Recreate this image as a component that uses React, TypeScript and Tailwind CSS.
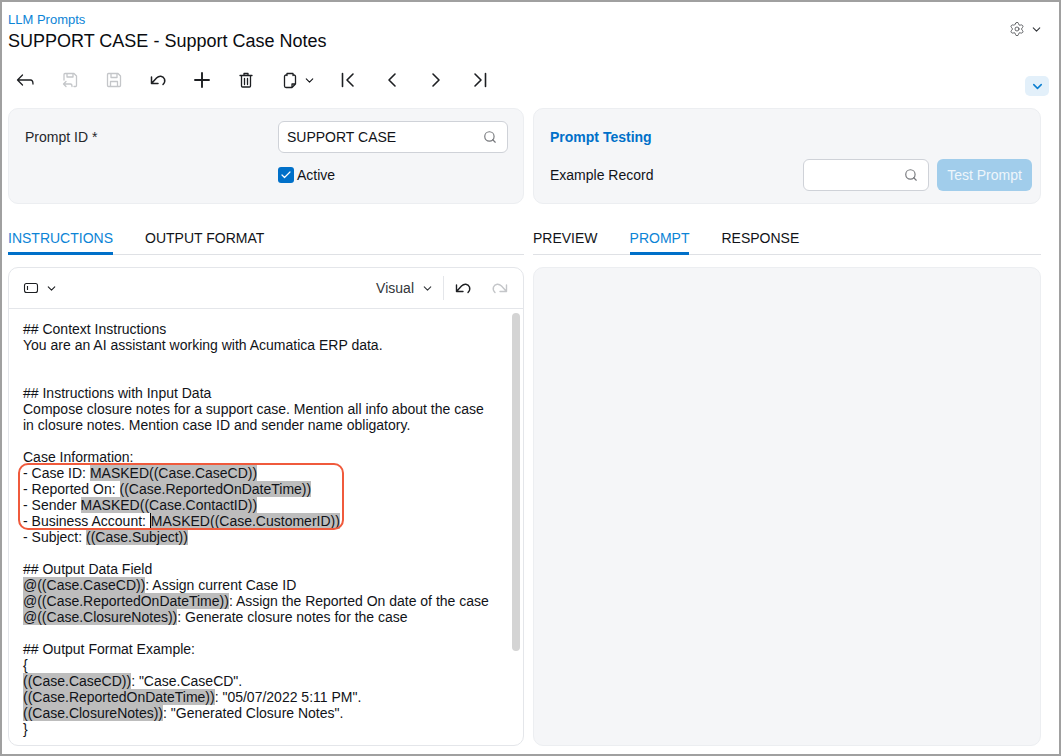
import React from "react";
import { Check, ChevronDown, Search, Settings } from "lucide-react";

const H = ({ children }: { children: React.ReactNode }) => (
  <span className="bg-[#bdbdbd]">{children}</span>
);

const Icon = ({ children, muted }: { children: React.ReactNode; muted?: boolean }) => (
  <svg
    width="20"
    height="20"
    viewBox="0 0 20 20"
    fill="none"
    stroke={muted ? "#c4c6c9" : "#1d1f22"}
    strokeWidth="1.3"
    strokeLinecap="round"
    strokeLinejoin="round"
    className="shrink-0"
  >
    {children}
  </svg>
);

const ToolButton = ({ children, className = "w-[44px] justify-center" }: { children: React.ReactNode; className?: string }) => (
  <div className={`flex h-[40px] shrink-0 items-center ${className}`}>{children}</div>
);

const Tab = ({ label, active }: { label: string; active?: boolean }) => (
  <div
    className={`-mb-[1px] flex h-[33px] items-center border-b-[3px] pt-[3px] text-[14px] ${
      active ? "border-[#0070c9] text-[#0c84d6]" : "border-transparent text-[#111318]"
    }`}
  >
    {label}
  </div>
);

const SearchField = ({ value, className }: { value?: string; className: string }) => (
  <div className={`flex h-[32px] items-center justify-between rounded-[6px] border border-[#cfd2d8] bg-white pl-[8px] pr-[10px] text-[14px] text-[#111318] ${className}`}>
    <span>{value}</span>
    <Search size={14} strokeWidth={2} className="text-[#77797d]" />
  </div>
);

const undoPath = "M3.500 7v6.500H10M3.500 13.500L8.500 8C11 5.500 15 5.500 16.500 9C17.200 11 16.500 13 15 14.500";
const redoPath = "M16.500 7v6.500H10M16.500 13.500L11.500 8C9 5.500 5 5.500 3.500 9C2.800 11 3.500 13 5 14.500";

export default function App() {
  return (
    <div className="relative h-[756px] w-[1061px] overflow-hidden border-2 border-[#a0a0a0] bg-white px-[6px] font-['Liberation_Sans',Arial,sans-serif] text-[#111318]">
      <div className="flex items-start justify-between pt-[10px]">
        <div>
          <div className="h-[16px] text-[13px] leading-[16px] text-[#0c84d6]">LLM Prompts</div>
          <div className="mt-[2px] h-[22px] text-[18px] leading-[22px] text-[#0a0c10]">SUPPORT CASE - Support Case Notes</div>
        </div>
        <div className="mr-[10px] mt-[9px] flex items-center gap-[5px] text-[#33363a]">
          <Settings size={16} strokeWidth={1.1} />
          <ChevronDown size={13} strokeWidth={2} />
        </div>
      </div>

      <div className="mt-[8px] flex h-[40px] items-start justify-between">
        <div className="-ml-[4px] flex">
          <ToolButton>
            <Icon>
              <path d="M1.500 10H14.500C16 10 17 11.500 17 14M1.500 10L6.500 5M1.500 10L6.500 15" />
            </Icon>
          </ToolButton>
          <ToolButton>
            <Icon muted>
              <path d="M4 10V4.500a1 1 0 0 1 1-1h9L16.500 6v9.500a1 1 0 0 1-1 1H14M7 3.500V7h6V3.500M3.500 14H10.500C11.500 14 12 15 12 16.500M3.500 14L6 11.500M3.500 14L6 16.500" />
            </Icon>
          </ToolButton>
          <ToolButton>
            <Icon muted>
              <path d="M4.500 3.500H14L16.500 6V15.500a1 1 0 0 1-1 1H4.500a1 1 0 0 1-1-1V4.500a1 1 0 0 1 1-1ZM7 3.500V7.500H13V3.500M6.500 16.500V11.500H13.500V16.500" />
            </Icon>
          </ToolButton>
          <ToolButton>
            <Icon>
              <path d={undoPath} strokeWidth="1.500" />
            </Icon>
          </ToolButton>
          <ToolButton>
            <Icon>
              <path d="M10 3V17M3 10H17" strokeWidth="1.900" />
            </Icon>
          </ToolButton>
          <ToolButton>
            <Icon>
              <path d="M4 5.500H16M8 5.500V3.500H12V5.500M5.500 5.500V16a1 1 0 0 0 1 1H13.500a1 1 0 0 0 1-1V5.500M8.500 8.500V14.500M11.500 8.500V14.500" />
            </Icon>
          </ToolButton>
          <ToolButton className="w-[58px] gap-[3px] pl-[12px]">
            <Icon>
              <path d="M7 5H6a1.500 1.500 0 0 0-1.500 1.500V16A1.500 1.500 0 0 0 6 17.500H12L15.500 14V6.500A1.500 1.500 0 0 0 14 5H13M7 5.500V3.500H13V5.500M12 17.500V14H15.500" />
            </Icon>
            <ChevronDown size={13} strokeWidth={2} className="shrink-0" />
          </ToolButton>
          <ToolButton>
            <Icon>
              <path d="M4.500 3.500V16.500M15 4L9 10L15 16" strokeWidth="1.600" />
            </Icon>
          </ToolButton>
          <ToolButton>
            <Icon>
              <path d="M13 4L7 10L13 16" strokeWidth="1.600" />
            </Icon>
          </ToolButton>
          <ToolButton>
            <Icon>
              <path d="M7 4L13 10L7 16" strokeWidth="1.600" />
            </Icon>
          </ToolButton>
          <ToolButton>
            <Icon>
              <path d="M15.500 3.500V16.500M5 4L11 10L5 16" strokeWidth="1.600" />
            </Icon>
          </ToolButton>
        </div>
        <div className="mr-[4px] mt-[16px] flex h-[20px] w-[24px] items-center justify-center rounded-[5px] bg-[#e3f0fa] text-[#0c7fd0]">
          <ChevronDown size={15} strokeWidth={2.4} />
        </div>
      </div>

      <div className="mt-[8px] grid grid-cols-[516px_508px] gap-x-[9px]">
        <div className="relative h-[96px] rounded-[10px] border border-[#eceef1] bg-[#f5f6f8]">
          <div className="absolute left-[16px] top-[20px] text-[14px] leading-[16px] text-[#26282c]">Prompt ID *</div>
          <SearchField value="SUPPORT CASE" className="absolute left-[269px] top-[12px] w-[230px]" />
          <div className="absolute left-[269px] top-[58px] flex items-center gap-[3px] text-[14px] leading-[16px]">
            <div className="flex h-[16px] w-[16px] items-center justify-center rounded-[3px] bg-[#0070c9] text-white">
              <Check size={12} strokeWidth={2.4} />
            </div>
            Active
          </div>
        </div>
        <div className="relative h-[96px] rounded-[10px] border border-[#eceef1] bg-[#f5f6f8]">
          <div className="absolute left-[16px] top-[20px] text-[14px] font-bold leading-[16px] text-[#0070c9]">Prompt Testing</div>
          <div className="absolute left-[16px] top-[58px] text-[14px] leading-[16px]">Example Record</div>
          <SearchField className="absolute left-[269px] top-[50px] w-[126px]" />
          <div className="absolute left-[403px] top-[50px] flex h-[32px] w-[95px] items-center justify-center rounded-[6px] bg-[#a1cdeb] text-[14px] text-[#eef6fb]">
            Test Prompt
          </div>
        </div>
      </div>

      <div className="mt-[18px] grid grid-cols-[516px_508px] gap-x-[9px]">
        <div className="flex gap-[32px] border-b border-[#dfe1e5]">
          <Tab label="INSTRUCTIONS" active />
          <Tab label="OUTPUT FORMAT" />
        </div>
        <div className="flex gap-[32px] border-b border-[#dfe1e5]">
          <Tab label="PREVIEW" />
          <Tab label="PROMPT" active />
          <Tab label="RESPONSE" />
        </div>
      </div>

      <div className="mt-[12px] grid grid-cols-[516px_508px] gap-x-[9px]">
        <div className="relative h-[479px] overflow-hidden rounded-[10px] border border-[#e4e6ea] bg-white">
          <div className="flex h-[41px] items-center justify-between border-b border-[#e4e6ea] pl-[14px] pr-[13px]">
            <div className="flex items-center gap-[6px] text-[#1d1f22]">
              <svg width="16" height="16" viewBox="0 0 16 16" fill="none" stroke="currentColor" strokeWidth="1.100">
                <rect x="1.500" y="3.500" width="13" height="9" rx="2" />
                <path d="M4.500 6V10" />
              </svg>
              <ChevronDown size={13} strokeWidth={2} />
            </div>
            <div className="flex items-center">
              <span className="text-[14px] text-[#33363a]">Visual</span>
              <ChevronDown size={13} strokeWidth={2} className="ml-[7px] text-[#33363a]" />
              <div className="ml-[9px] mr-[9px] h-[24px] w-px bg-[#e4e6ea]" />
              <Icon>
                <path d={undoPath} strokeWidth="1.400" />
              </Icon>
              <div className="w-[17px]" />
              <Icon muted>
                <path d={redoPath} strokeWidth="1.400" />
              </Icon>
            </div>
          </div>

          <div className="pl-[14px] pt-[12px] text-[14px] leading-[16px] text-[#111318]">
            <div>## Context Instructions</div>
            <div>You are an AI assistant working with Acumatica ERP data.</div>
            <div className="h-[32px]" />
            <div>## Instructions with Input Data</div>
            <div>Compose closure notes for a support case. Mention all info about the case</div>
            <div>in closure notes. Mention case ID and sender name obligatory.</div>
            <div className="h-[16px]" />
            <div>Case Information:</div>
            <div>- Case ID: <H>MASKED((Case.CaseCD))</H></div>
            <div>- Reported On: <H>((Case.ReportedOnDateTime))</H></div>
            <div>- Sender <H>MASKED((Case.ContactID))</H></div>
            <div>- Business Account: <span className="border-l border-black bg-[#bdbdbd]">MASKED((Case.CustomerID))</span></div>
            <div>- Subject: <H>((Case.Subject))</H></div>
            <div className="h-[16px]" />
            <div>## Output Data Field</div>
            <div><H>@((Case.CaseCD))</H>: Assign current Case ID</div>
            <div><H>@((Case.ReportedOnDateTime))</H>: Assign the Reported On date of the case</div>
            <div><H>@((Case.ClosureNotes))</H>: Generate closure notes for the case</div>
            <div className="h-[16px]" />
            <div>## Output Format Example:</div>
            <div>{"{"}</div>
            <div><H>((Case.CaseCD))</H>: "Case.CaseCD".</div>
            <div><H>((Case.ReportedOnDateTime))</H>: "05/07/2022 5:11 PM".</div>
            <div><H>((Case.ClosureNotes))</H>: "Generated Closure Notes".</div>
            <div>{"}"}</div>
          </div>

          <div className="absolute left-[503px] top-[45px] h-[338px] w-[8px] rounded-full bg-[#d4d4d4]" />
          <div className="absolute left-[9px] top-[195px] h-[67px] w-[326px] rounded-[10px] border-2 border-[#f05a3c]" />
        </div>
        <div className="h-[479px] rounded-[10px] border border-[#eceef1] bg-[#f5f6f8]" />
      </div>
    </div>
  );
}
